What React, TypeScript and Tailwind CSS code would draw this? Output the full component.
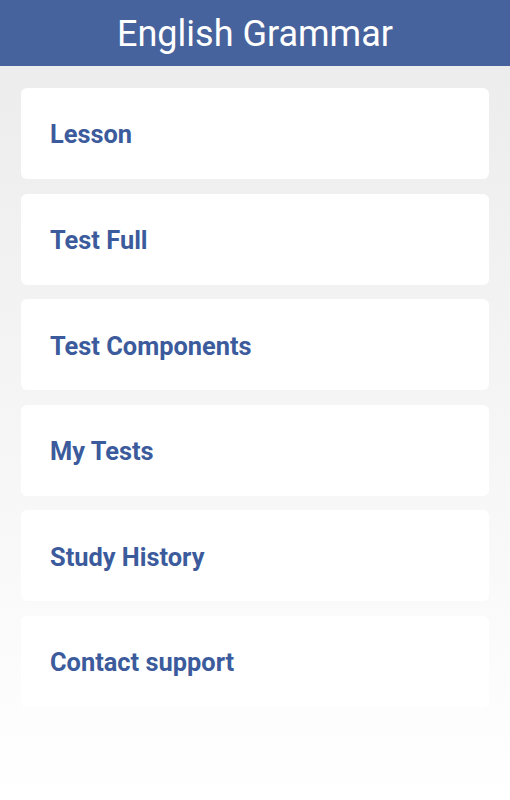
const ITEMS = ['Lesson', 'Test Full', 'Test Components', 'My Tests', 'Study History', 'Contact support'];

export default function App() {
  return (
    <div
      className="w-[510px] h-[800px] flex flex-col bg-gradient-to-b from-[#ebebeb] to-white"
      style={{ fontFamily: 'Roboto, "Noto Sans", sans-serif' }}
    >
      <header className="h-[66px] shrink-0 bg-[#47639d] flex items-center justify-center">
        <h1 className="text-[36px] text-white leading-none pt-[2px]">English Grammar</h1>
      </header>

      <div className="flex flex-col gap-[14.6px] px-[21px] pt-[22px]">
        {ITEMS.map(label => (
          <div key={label} className="h-[91px] bg-white rounded-[6px] flex items-center pl-[29px]">
            <span className="text-[25.4px] font-bold text-[#3b5b9c] pt-[2px]">{label}</span>
          </div>
        ))}
      </div>
    </div>
  );
}
